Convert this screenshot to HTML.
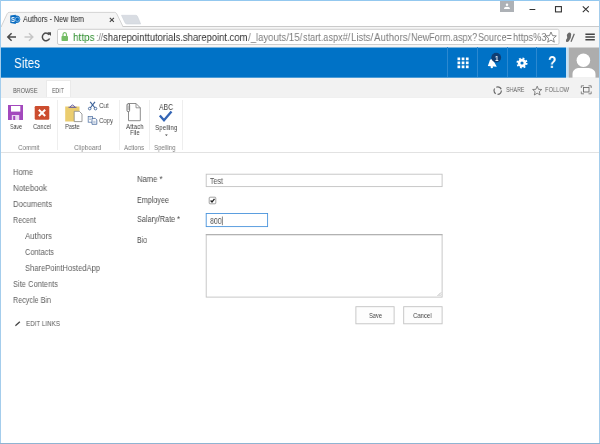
<!DOCTYPE html>
<html>
<head>
<meta charset="utf-8">
<title>Authors - New Item</title>
<style>
html,body{margin:0;padding:0;}
body{width:600px;height:444px;overflow:hidden;background:#fff;font-family:"Liberation Sans",sans-serif;position:relative;color:#444;}
.abs{position:absolute;}
#win{position:absolute;left:0;top:0;width:600px;height:444px;background:#fff;overflow:hidden;}
.bd{position:absolute;background:#a4cdec;}
.t{position:absolute;white-space:nowrap;line-height:1;transform-origin:0 0;margin:0;padding:0;will-change:transform;}
/* browser chrome */
#titlebar{left:0;top:0;width:600px;height:25px;background:#fff;}
#toolbar{left:0;top:26px;width:600px;height:22px;background:#f5f5f5;border-top:1px solid #cacaca;box-sizing:border-box;}
#omni{left:56px;top:29px;width:502px;height:15px;background:#fff;border:1px solid #c9c9c9;border-radius:2px;box-sizing:border-box;}
/* suite bar */
#suite{left:0;top:47px;width:565px;height:30px;background:#0072c6;}
.sep{top:47px;width:1px;height:30px;background:#2b88d0;}
/* ribbon */
#rtabs{left:0;top:78px;width:600px;height:19px;background:#f2f2f2;}
#edittab{left:46px;top:80px;width:25px;height:18px;background:#fff;border:1px solid #eaeaea;border-bottom:none;box-sizing:border-box;}
#rbody{left:0;top:97px;width:600px;height:56px;background:#fff;border-bottom:1px solid #e2e2e2;border-top:1px solid #f0f0f0;box-sizing:border-box;}
.gsep{top:100px;width:1px;height:50px;background:#eeeeee;}
/* form */
.inp{box-sizing:border-box;border:1px solid #c4c4c4;background:#fff;}
.btn{box-sizing:border-box;border:1px solid #c4c4c4;background:#fdfdfd;height:18px;top:305px;}
</style>
</head>
<body>
<div id="win">
  <div class="abs" id="titlebar"></div>
  <div class="abs" id="toolbar"></div>
  <svg class="abs" style="left:0;top:0" width="600" height="28" viewBox="0 0 600 28">
    <path d="M1 27.200 L7.200 13.700 Q7.800 12.400 9.400 12.400 L114.500 12.400 Q116.100 12.400 116.700 13.700 L123.300 27.200 Z" fill="#f5f5f5"/>
    <path d="M1 27 L7.200 13.700 Q7.800 12.400 9.400 12.400 L114.500 12.400 Q116.100 12.400 116.700 13.700 L123.200 27" fill="none" stroke="#c9c9c9" stroke-width="0.800"/>
    <path d="M121.500 15.300 L135.600 15.300 Q137.100 15.300 137.600 16.600 L140.700 24 L127 24 Q125.500 24 125 22.700 Z" fill="#d9dde3" stroke="#ced3da" stroke-width="0.600"/>
    <!-- favicon -->
    <circle cx="16.400" cy="19.300" r="3.800" fill="#0a6cc0"/>
    <path d="M10.300 15.600 L15.800 14.700 L15.800 23.900 L10.300 23 Z" fill="#0a6cc0"/>
    <circle cx="17.300" cy="19.300" r="2.100" fill="none" stroke="#7db6e6" stroke-width="0.900"/>
    <!-- tab close -->
    <path d="M109.800 17.800 L113.900 21.800 M113.900 17.800 L109.800 21.800" stroke="#444" stroke-width="1.100" fill="none"/>
    <!-- window controls -->
    <rect x="500" y="0" width="14" height="12" fill="#adb1b6"/>
    <circle cx="507" cy="4.800" r="1.250" fill="#fff"/>
    <path d="M504 8.900 Q504 6.700 507 6.700 Q510 6.700 510 8.900 Z" fill="#fff"/>
    <path d="M529.500 9.500 L535.300 9.500" stroke="#333" stroke-width="1"/>
    <rect x="555.500" y="6.600" width="5.900" height="5.300" fill="none" stroke="#333" stroke-width="1.100"/>
    <path d="M582.800 6.300 L588.800 12.100 M588.800 6.300 L582.800 12.100" stroke="#333" stroke-width="1.100"/>
  </svg>
  <svg class="abs" style="left:0;top:26px" width="600" height="22" viewBox="0 26 600 22"><rect x="57.500" y="29.300" width="501.500" height="15.200" rx="1.500" fill="#fff" stroke="#c8c8c8" stroke-width="0.900"/></svg>
  <svg class="abs" style="left:0;top:26px" width="600" height="21" viewBox="0 26 600 21">
    <!-- back -->
    <path d="M7.800 37 L16 37 M11.600 33.200 L7.800 37 L11.600 40.800" stroke="#4a4a4a" stroke-width="1.500" fill="none"/>
    <!-- forward -->
    <path d="M24.500 37 L32.700 37 M29 33.200 L32.800 37 L29 40.800" stroke="#c6c6c6" stroke-width="1.500" fill="none"/>
    <!-- reload -->
    <path d="M49.300 34.800 A3.800 3.800 0 1 0 49.600 38.500" stroke="#4a4a4a" stroke-width="1.500" fill="none"/>
    <path d="M47.300 32.300 L51 32.300 L51 36 Z" fill="#4a4a4a"/>
    <!-- lock -->
    <rect x="61.500" y="36" width="6.500" height="5" rx="0.800" fill="#74bd65"/>
    <path d="M63 36.200 L63 34.600 Q63 32.700 64.750 32.700 Q66.500 32.700 66.500 34.600 L66.500 36.200" stroke="#74bd65" stroke-width="1.200" fill="none"/>
    <!-- star -->
    <path d="M551 32 L552.500 35.600 L556.300 35.900 L553.400 38.400 L554.300 42.200 L551 40.100 L547.700 42.200 L548.600 38.400 L545.700 35.900 L549.500 35.600 Z" fill="none" stroke="#6a6a6a" stroke-width="0.800"/>
    <!-- extension -->
    <path d="M568.600 32.800 Q570.600 31.600 571.200 34.200 Q571.400 37.500 569 41 Q567.400 42.600 566 41.400 Q565.500 39.800 567.200 38 Q567.200 36.300 566.800 35 Q567.400 33.500 568.600 32.800 Z" fill="#6a6a6a"/>
    <path d="M574.300 33.800 L571 41.800" stroke="#6a6a6a" stroke-width="1.300"/>
    <!-- menu -->
    <path d="M585.400 34.200 L594.800 34.200 M585.400 37 L594.800 37 M585.400 39.800 L594.800 39.800" stroke="#444" stroke-width="1.600"/>
  </svg>

  <!-- suite bar -->
  <svg class="abs" style="left:0;top:46px" width="600" height="33" viewBox="0 46 600 33"><rect x="1" y="47.500" width="565" height="30.200" fill="#0072c6"/>
    <rect x="566" y="47.500" width="2.700" height="30.200" fill="#c4e1f5"/>
    <rect x="568.700" y="47.500" width="30.300" height="30.200" fill="#adadad"/>
    <circle cx="583.400" cy="60.300" r="6.800" fill="#fff"/>
    <path d="M572.500 77.700 L572.500 74 Q572.500 69.300 578 68 L589 68 Q595.500 69.300 595.500 74 L595.500 77.700 Z" fill="#fff"/></svg>
  <div class="abs sep" style="left:447px"></div>
  <div class="abs sep" style="left:477px"></div>
  <div class="abs sep" style="left:507px"></div>
  <div class="abs sep" style="left:536px"></div>
  <svg class="abs" style="left:445px;top:47px" width="120" height="30" viewBox="445 47 120 30">
    <g fill="#fff">
      <rect x="457.500" y="57.500" width="2.700" height="2.700"/><rect x="461.700" y="57.500" width="2.700" height="2.700"/><rect x="465.900" y="57.500" width="2.700" height="2.700"/>
      <rect x="457.500" y="61.500" width="2.700" height="2.700"/><rect x="461.700" y="61.500" width="2.700" height="2.700"/><rect x="465.900" y="61.500" width="2.700" height="2.700"/>
      <rect x="457.500" y="65.500" width="2.700" height="2.700"/><rect x="461.700" y="65.500" width="2.700" height="2.700"/><rect x="465.900" y="65.500" width="2.700" height="2.700"/>
    </g>
    <!-- bell -->
    <path d="M491.300 59 Q493.600 59.500 494.300 62.300 L496.800 66.800 L487.800 66 L489.200 62.300 Q489.600 59.600 491.300 59 Z" fill="#fff"/>
    <circle cx="491.800" cy="67" r="1.200" fill="#fff"/>
    <circle cx="496.200" cy="57.600" r="4.900" fill="#0f3e74"/>
    <!-- gear -->
    <circle cx="522" cy="63" r="2.900" fill="none" stroke="#fff" stroke-width="2.600"/>
    <circle cx="522" cy="63" r="4.700" fill="none" stroke="#fff" stroke-width="1.700" stroke-dasharray="1.850 1.840"/>
  </svg>

  <!-- ribbon tabs -->
  <div class="abs" id="rtabs"></div>
  <div class="abs" id="edittab"></div>
  <svg class="abs" style="left:490px;top:80px" width="108" height="18" viewBox="490 80 108 18">
    <circle cx="497.700" cy="90.600" r="3.700" fill="none" stroke="#6a6a6a" stroke-width="1.200" stroke-dasharray="5.800 1.950"/>
    <path d="M537.200 86.200 L538.500 89.300 L541.800 89.500 L539.300 91.700 L540.100 95 L537.200 93.200 L534.300 95 L535.100 91.700 L532.600 89.500 L535.900 89.300 Z" fill="none" stroke="#6a6a6a" stroke-width="0.800"/>
    <rect x="583.500" y="87.500" width="5.500" height="4.500" fill="none" stroke="#6a6a6a" stroke-width="0.900"/>
    <path d="M581.300 88 L581.300 85.800 L584 85.800 M588.500 85.800 L591.200 85.800 L591.200 88 M591.200 91.500 L591.200 93.800 L588.500 93.800 M584 93.800 L581.300 93.800 L581.300 91.500" fill="none" stroke="#6a6a6a" stroke-width="0.800"/>
  </svg>

  <!-- ribbon body -->
  <div class="abs" id="rbody"></div>
  <svg class="abs" style="left:0;top:98px" width="200" height="42" viewBox="0 98 200 42">
    <!-- save -->
    <path d="M8 105 L23 105 L23 120 L8 120 Z" fill="#a349bd"/>
    <rect x="11" y="106" width="9.300" height="5.600" fill="#fff"/>
    <rect x="11.800" y="115" width="7.400" height="5" fill="#ead6f1"/>
    <rect x="13.200" y="116" width="2" height="4" fill="#a349bd"/>
    <!-- cancel -->
    <rect x="34.700" y="106" width="14.600" height="13.700" rx="1.200" fill="#cc4d2f"/>
    <path d="M38.800 109.800 L45.200 116 M45.200 109.800 L38.800 116" stroke="#fff" stroke-width="2"/>
    <!-- paste -->
    <rect x="65.200" y="106.500" width="14.300" height="15" fill="#ebcd6f"/>
    <path d="M68.500 107.300 L76.500 107.300 M70.300 107 Q72.500 103 74.700 107" fill="none" stroke="#5f58a0" stroke-width="1"/>
    <path d="M74.200 111.300 L79.300 111.300 L82 114 L82 121.600 L74.200 121.600 Z" fill="#fff" stroke="#858585" stroke-width="0.800"/>
    <!-- cut -->
    <path d="M90.200 101.800 L95 108 M95 101.800 L90.200 108" stroke="#41659a" stroke-width="1.200"/>
    <circle cx="89.700" cy="108.600" r="1.300" fill="none" stroke="#41659a" stroke-width="0.900"/>
    <circle cx="95.500" cy="108.600" r="1.300" fill="none" stroke="#41659a" stroke-width="0.900"/>
    <!-- copy -->
    <rect x="88.200" y="116.400" width="4.200" height="5.800" fill="#fff" stroke="#5a7aa8" stroke-width="0.800"/>
    <path d="M89.200 118 L91.400 118 M89.200 119.500 L91 119.500" stroke="#5a7aa8" stroke-width="0.500"/>
    <path d="M92 118.400 L95.300 118.400 L96.800 119.900 L96.800 124.300 L92 124.300 Z" fill="#fff" stroke="#41659a" stroke-width="0.800"/>
    <path d="M93.200 121.300 L95.600 121.300 M93.200 122.700 L95.600 122.700" stroke="#5a7aa8" stroke-width="0.500"/>
    <!-- attach -->
    <path d="M128.500 103.500 L136 103.500 L140.300 107.800 L140.300 120.700 L128.500 120.700 Z" fill="#fff" stroke="#808080" stroke-width="0.900"/>
    <path d="M136 103.500 L136 107.800 L140.300 107.800" fill="none" stroke="#808080" stroke-width="0.800"/>
    <rect x="127" y="103.700" width="2.600" height="8" rx="1.300" fill="#fff" stroke="#666" stroke-width="0.900"/>
    <path d="M128.300 105.500 L128.300 110" stroke="#888" stroke-width="0.600"/>
    <!-- spelling check -->
    <path d="M159.800 115.500 L164 120.300 L171.500 111.500" fill="none" stroke="#3465b5" stroke-width="2.300"/>
    <path d="M165 134.500 L167.800 134.500 L166.400 136.100 Z" fill="#444"/>
  </svg>
  <div class="abs gsep" style="left:57px"></div>
  <div class="abs gsep" style="left:119px"></div>
  <div class="abs gsep" style="left:149px"></div>
  <div class="abs gsep" style="left:182px"></div>

  <!-- left nav icon -->
  <svg class="abs" style="left:14px;top:320px" width="8" height="8" viewBox="14 320 8 8"><path d="M15 326.200 L15.500 324.800 L19.400 321.300 L20.300 322.300 L16.400 325.800 Z" fill="#444"/></svg>

  <!-- form -->
  <svg class="abs" style="left:200px;top:170px" width="250" height="160" viewBox="200 170 250 160">
    <rect x="206.200" y="174.200" width="235.900" height="12.400" fill="#fff" stroke="#c2c2c2" stroke-width="0.900"/>
    <rect x="209.200" y="197.200" width="6.600" height="6.600" rx="0.800" fill="#fff" stroke="#8c8c8c" stroke-width="0.800"/>
    <path d="M210.600 200.500 L212 202 L214.500 198.800" fill="none" stroke="#222" stroke-width="1.300"/>
    <rect x="206.200" y="213.500" width="61.400" height="13.100" fill="#fff" stroke="#4a94dc" stroke-width="0.900"/>
    <path d="M222.400 216.500 L222.400 225.200" stroke="#555" stroke-width="0.700"/>
    <rect x="206.200" y="234.700" width="235.900" height="62.400" fill="#fff" stroke="#c2c2c2" stroke-width="0.900"/>
    <path d="M205.800 234.700 L442.500 234.700" stroke="#a6a6a6" stroke-width="0.900"/>
    <path d="M437.500 296 L441 292.500 M439.500 296 L441 294.500" stroke="#909090" stroke-width="0.600"/>
    <rect x="355.900" y="306.700" width="38.200" height="17.100" fill="#fdfdfd" stroke="#c2c2c2" stroke-width="0.900"/>
    <rect x="403.700" y="306.700" width="38.400" height="17.100" fill="#fdfdfd" stroke="#c2c2c2" stroke-width="0.900"/>
  </svg>

  <span class="t" style="left:23.00px;top:15.81px;font-size:8.2px;color:#222;transform:scaleX(0.8705);">Authors - New Item</span>
  <span class="t" style="left:73.00px;top:32.18px;font-size:11.3px;color:#2f8f2f;transform:scaleX(0.8857);">https</span>
  <span class="t" style="left:95.50px;top:32.18px;font-size:11.3px;color:#7d7d7d;transform:scaleX(0.7536);">://</span>
  <span class="t" style="left:103.20px;top:32.18px;font-size:11.3px;color:#333;transform:scaleX(0.8368);">sharepointtutorials.sharepoint.com</span>
  <span class="t" style="left:248.30px;top:32.18px;font-size:11.3px;color:#7d7d7d;transform:scaleX(0.8460);">/_layouts/15/</span>
  <span class="t" style="left:303.00px;top:32.18px;font-size:11.3px;color:#7d7d7d;transform:scaleX(0.8098);">start.aspx#/</span>
  <span class="t" style="left:350.80px;top:32.18px;font-size:11.3px;color:#7d7d7d;transform:scaleX(0.8417);">Lists/</span>
  <span class="t" style="left:373.70px;top:32.18px;font-size:11.3px;color:#7d7d7d;transform:scaleX(0.8627);">Authors/</span>
  <span class="t" style="left:410.80px;top:32.18px;font-size:11.3px;color:#7d7d7d;transform:scaleX(0.8049);">NewForm.aspx?</span>
  <span class="t" style="left:477.50px;top:32.18px;font-size:11.3px;color:#7d7d7d;transform:scaleX(0.7971);">Source=</span>
  <span class="t" style="left:512.50px;top:32.18px;font-size:11.3px;color:#7d7d7d;transform:scaleX(0.8205);">https%3</span>
  <span class="t" style="left:14.00px;top:56.48px;font-size:14.5px;color:#fff;transform:scaleX(0.8062);">Sites</span>
  <span class="t" style="left:494.50px;top:54.62px;font-size:7.6px;color:#fff;font-weight:bold;transform:scaleX(0.8266);">1</span>
  <span class="t" style="left:547.60px;top:55.01px;font-size:16px;color:#fff;font-weight:bold;transform:scaleX(0.8588);">?</span>
  <span class="t" style="left:11.30px;top:16.32px;font-size:7px;color:#fff;font-weight:bold;transform:scaleX(0.8562);">S</span>
  <span class="t" style="left:13.00px;top:86.72px;font-size:7.6px;color:#5c5c5c;transform:scaleX(0.7256);">BROWSE</span>
  <span class="t" style="left:52.00px;top:86.72px;font-size:7.6px;color:#5c5c5c;transform:scaleX(0.6931);">EDIT</span>
  <span class="t" style="left:505.50px;top:86.49px;font-size:7.4px;color:#666;transform:scaleX(0.7264);">SHARE</span>
  <span class="t" style="left:545.00px;top:86.49px;font-size:7.4px;color:#666;transform:scaleX(0.7688);">FOLLOW</span>
  <span class="t" style="left:10.00px;top:122.98px;font-size:8px;color:#464646;transform:scaleX(0.6581);">Save</span>
  <span class="t" style="left:33.00px;top:122.98px;font-size:8px;color:#464646;transform:scaleX(0.7227);">Cancel</span>
  <span class="t" style="left:65.00px;top:122.98px;font-size:8px;color:#464646;transform:scaleX(0.7182);">Paste</span>
  <span class="t" style="left:99.00px;top:102.38px;font-size:8px;color:#464646;transform:scaleX(0.7709);">Cut</span>
  <span class="t" style="left:99.00px;top:116.78px;font-size:8px;color:#464646;transform:scaleX(0.7492);">Copy</span>
  <span class="t" style="left:126.00px;top:122.98px;font-size:8px;color:#464646;transform:scaleX(0.7758);">Attach</span>
  <span class="t" style="left:130.00px;top:128.98px;font-size:8px;color:#464646;transform:scaleX(0.7447);">File</span>
  <span class="t" style="left:159.00px;top:102.72px;font-size:8.3px;color:#444;transform:scaleX(0.8322);">ABC</span>
  <span class="t" style="left:155.00px;top:123.78px;font-size:8px;color:#464646;transform:scaleX(0.7868);">Spelling</span>
  <span class="t" style="left:17.50px;top:143.58px;font-size:8px;color:#7c7c7c;transform:scaleX(0.7800);">Commit</span>
  <span class="t" style="left:74.00px;top:143.58px;font-size:8px;color:#7c7c7c;transform:scaleX(0.7883);">Clipboard</span>
  <span class="t" style="left:124.00px;top:143.58px;font-size:8px;color:#7c7c7c;transform:scaleX(0.7624);">Actions</span>
  <span class="t" style="left:154.40px;top:143.58px;font-size:8px;color:#7c7c7c;transform:scaleX(0.7587);">Spelling</span>
  <span class="t" style="left:13.00px;top:168.47px;font-size:8.6px;color:#606060;transform:scaleX(0.8719);">Home</span>
  <span class="t" style="left:13.00px;top:184.47px;font-size:8.6px;color:#606060;transform:scaleX(0.9240);">Notebook</span>
  <span class="t" style="left:13.00px;top:200.47px;font-size:8.6px;color:#606060;transform:scaleX(0.8972);">Documents</span>
  <span class="t" style="left:13.00px;top:216.47px;font-size:8.6px;color:#606060;transform:scaleX(0.8445);">Recent</span>
  <span class="t" style="left:25.00px;top:232.47px;font-size:8.6px;color:#606060;transform:scaleX(0.9114);">Authors</span>
  <span class="t" style="left:25.00px;top:248.47px;font-size:8.6px;color:#606060;transform:scaleX(0.8549);">Contacts</span>
  <span class="t" style="left:25.00px;top:264.47px;font-size:8.6px;color:#606060;transform:scaleX(0.8819);">SharePointHostedApp</span>
  <span class="t" style="left:13.00px;top:280.47px;font-size:8.6px;color:#606060;transform:scaleX(0.8722);">Site Contents</span>
  <span class="t" style="left:13.00px;top:296.47px;font-size:8.6px;color:#606060;transform:scaleX(0.8375);">Recycle Bin</span>
  <span class="t" style="left:26.00px;top:320.38px;font-size:8px;color:#555;transform:scaleX(0.7830);">EDIT LINKS</span>
  <span class="t" style="left:137.00px;top:175.29px;font-size:8.7px;color:#4d4d4d;transform:scaleX(0.8803);">Name *</span>
  <span class="t" style="left:137.00px;top:196.29px;font-size:8.7px;color:#4d4d4d;transform:scaleX(0.8281);">Employee</span>
  <span class="t" style="left:137.00px;top:215.19px;font-size:8.7px;color:#4d4d4d;transform:scaleX(0.8400);">Salary/Rate *</span>
  <span class="t" style="left:137.00px;top:235.99px;font-size:8.7px;color:#4d4d4d;transform:scaleX(0.7960);">Bio</span>
  <span class="t" style="left:210.00px;top:177.47px;font-size:8.6px;color:#555;transform:scaleX(0.8246);">Test</span>
  <span class="t" style="left:210.00px;top:217.47px;font-size:8.6px;color:#555;transform:scaleX(0.8157);">800</span>
  <span class="t" style="left:368.70px;top:311.98px;font-size:8px;color:#464646;transform:scaleX(0.7129);">Save</span>
  <span class="t" style="left:413.20px;top:311.98px;font-size:8px;color:#464646;transform:scaleX(0.7428);">Cancel</span>
  <div class="bd" style="left:0;top:0;width:600px;height:1px;background:#93c8ef"></div>
  <div class="bd" style="left:0;top:0;width:1px;height:444px"></div>
  <div class="bd" style="left:599px;top:0;width:1px;height:444px"></div>
  <div class="bd" style="left:0;top:443px;width:600px;height:1px;background:#8fb4d2"></div>
</div>
</body>
</html>
